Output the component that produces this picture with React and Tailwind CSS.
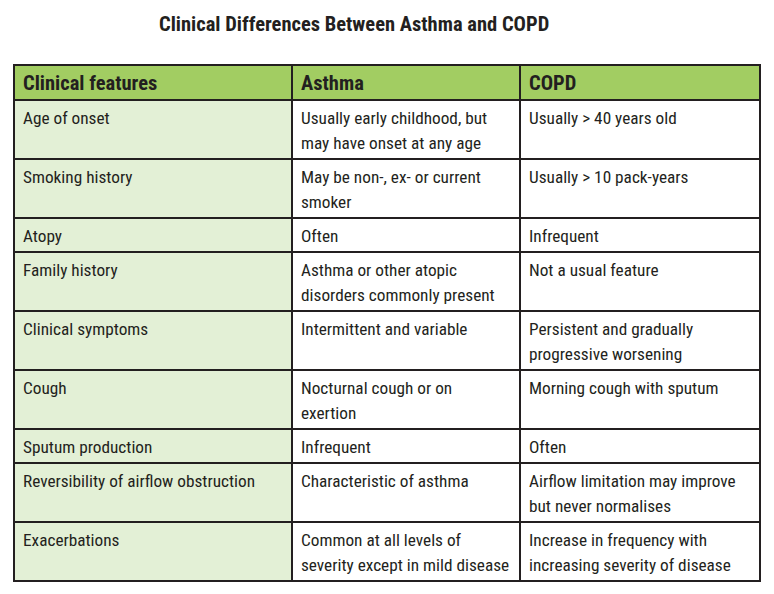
import React from "react";

const rows = [
  ["Age of onset", ["Usually early childhood, but", "may have onset at any age"], ["Usually > 40 years old"]],
  ["Smoking history", ["May be non-, ex- or current", "smoker"], ["Usually > 10 pack-years"]],
  ["Atopy", ["Often"], ["Infrequent"]],
  ["Family history", ["Asthma or other atopic", "disorders commonly present"], ["Not a usual feature"]],
  ["Clinical symptoms", ["Intermittent and variable"], ["Persistent and gradually", "progressive worsening"]],
  ["Cough", ["Nocturnal cough or on", "exertion"], ["Morning cough with sputum"]],
  ["Sputum production", ["Infrequent"], ["Often"]],
  ["Reversibility of airflow obstruction", ["Characteristic of asthma"], ["Airflow limitation may improve", "but never normalises"]],
  ["Exacerbations", ["Common at all levels of", "severity except in mild disease"], ["Increase in frequency with", "increasing severity of disease"]],
];

const font = { fontFamily: '"Roboto Condensed", "Liberation Sans", sans-serif' };

function Lines({ lines }) {
  return lines.map((l, i) => (
    <div key={i} className="whitespace-nowrap">{l}</div>
  ));
}

export default function App() {
  return (
    <div className="w-[774px] h-[594px] bg-white text-[#231f20]" style={font}>
      <div className="pt-[12px] pl-[159px] text-[20.5px] leading-[24px] font-bold">
        Clinical Differences Between Asthma and COPD
      </div>
      <div className="ml-[13px] mt-[28px] w-[748px] grid grid-cols-[276px_226px_238px] gap-[2px] p-[2px] bg-[#231f20]">
        <div className="bg-[#a2cd62] pl-[8px] pt-[5px] pb-[3px] text-[20.5px] leading-[25px] font-bold">Clinical features</div>
        <div className="bg-[#a2cd62] pl-[8px] pt-[5px] pb-[3px] text-[20.5px] leading-[25px] font-bold">Asthma</div>
        <div className="bg-[#a2cd62] pl-[8px] pt-[5px] pb-[3px] text-[20.5px] leading-[25px] font-bold">COPD</div>
        {rows.map(([f, a, c], i) => (
          <React.Fragment key={i}>
            <div className="bg-[#e3f0d6] pl-[8px] pt-[5px] pb-[2px] text-[17.25px] leading-[25px] whitespace-nowrap">{f}</div>
            <div className="bg-white pl-[8px] pt-[5px] pb-[2px] text-[17.25px] leading-[25px]"><Lines lines={a} /></div>
            <div className="bg-white pl-[8px] pt-[5px] pb-[2px] text-[17.25px] leading-[25px]"><Lines lines={c} /></div>
          </React.Fragment>
        ))}
      </div>
    </div>
  );
}
